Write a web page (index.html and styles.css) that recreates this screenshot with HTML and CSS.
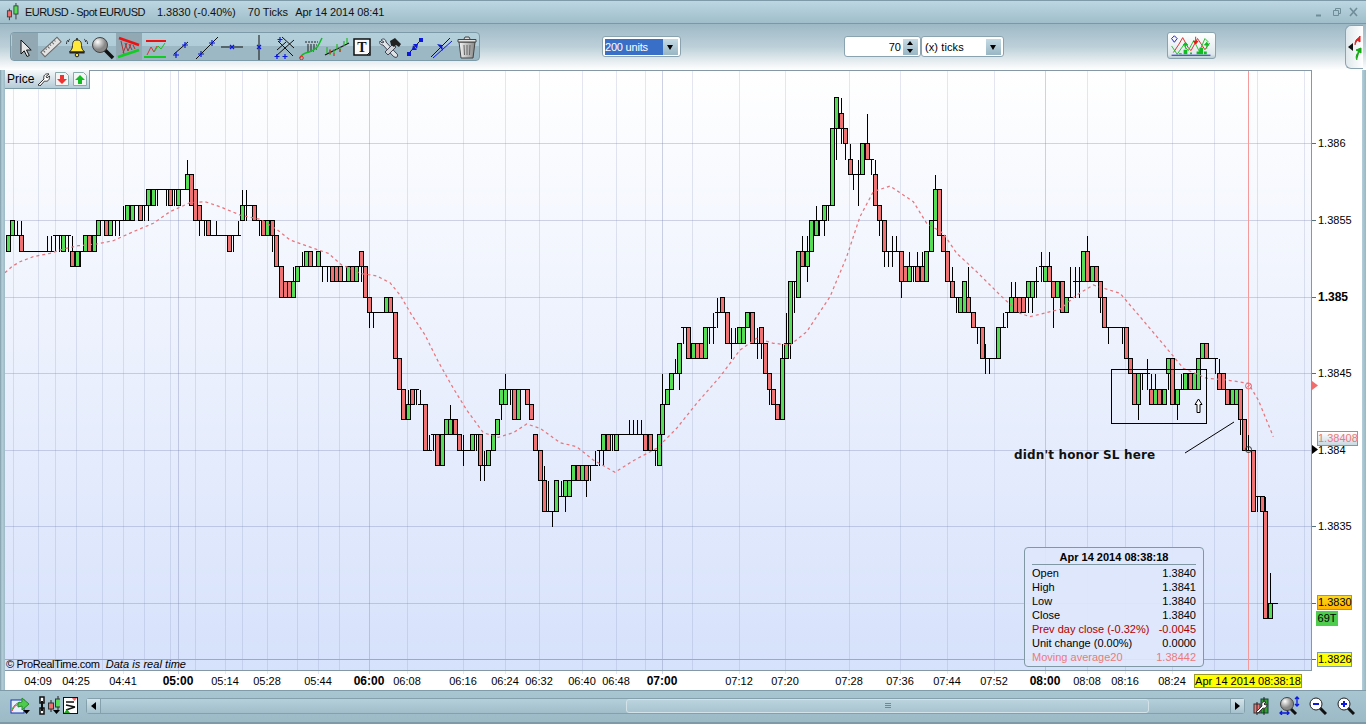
FILE: index.html
```html
<!DOCTYPE html>
<html lang="en">
<head>
<meta charset="utf-8">
<title>EURUSD - Spot EUR/USD</title>
<link rel="stylesheet" href="styles.css">
</head>
<body>
<div class="app">
  <header class="titlebar">
    <svg class="title-ico" viewBox="0 0 18 22"><path d="M4 7v14M12 0v20" stroke="#222"/><rect x="1.5" y="9.5" width="5" height="7.5" fill="#ee7070" stroke="#333"/><rect x="9.5" y="3.5" width="5" height="10" fill="#55dd55" stroke="#333"/></svg>
    <span class="t1">EURUSD - Spot EUR/USD</span>
    <span class="t2">1.3830 (-0.40%)</span>
    <span class="t3">70 Ticks</span>
    <span class="t4">Apr 14 2014 08:41</span>
    <div class="winctl">
      <svg viewBox="0 0 42 10" width="42" height="10"><path d="M0 8.5h5" stroke="#6f8c99" stroke-width="2"/><path d="M17.5 3.5h5v5h-5zM19.5 3.5v-2h5v5h-2" fill="none" stroke="#6f8c99"/><path d="M34 1l7 8M41 1l-7 8" stroke="#6f8c99" stroke-width="1.6"/></svg>
    </div>
  </header>

  <section class="toolbar">
    <div class="tools">
      <button class="tool on"><svg viewBox="0 0 26 26"><path d="M9 6v14l3.200-3.200 2.800 5.700 2.300-1-2.800-5.500h4.700z" fill="#e6e6e6" stroke="#111"/></svg></button>
      <button class="tool"><svg viewBox="0 0 26 26"><g transform="rotate(-43 13 13)"><rect x="2" y="10" width="22" height="6" fill="#e4e4e4" stroke="#666"/><path d="M5 10.500v2.500M8 10.500v1.500M11 10.500v2.500M14 10.500v1.500M17 10.500v2.500M20 10.500v1.500" stroke="#666"/></g></svg></button>
      <button class="tool"><svg viewBox="0 0 26 26"><path d="M13 6c-4 0-4.500 3-4.500 5.500 0 4-2 5-3 6.500h15c-1-1.500-3-2.500-3-6.500C17.500 9 17 6 13 6z" fill="#ffe83a" stroke="#222"/><path d="M5.500 18.500h15" stroke="#222" stroke-width="2"/><circle cx="13" cy="21" r="1.800" fill="#ffe83a" stroke="#222"/><circle cx="13" cy="5" r="1" fill="#222"/><path d="M4 6c-1 1-1.500 2-1.500 4M6 5c-1 .5-1.500 1.500-1.500 3M22 6c1 1 1.500 2 1.500 4M20 5c1 .5 1.500 1.500 1.500 3" stroke="#333" fill="none"/></svg></button>
      <button class="tool"><svg viewBox="0 0 26 26"><defs><radialGradient id="lens" cx=".35" cy=".3"><stop offset="0" stop-color="#fff"/><stop offset="1" stop-color="#888"/></radialGradient></defs><path d="M15 16l8 8" stroke="#111" stroke-width="3.500"/><circle cx="10" cy="11" r="7.500" fill="url(#lens)" stroke="#444"/></svg></button>
      <button class="tool on"><svg viewBox="0 0 26 26"><path d="M5 7l3 13M9 9l3 8M13 10l3 6M17 11l2 4" stroke="#a33"/><path d="M7 19l4-10M12 17l3-7" stroke="#a33"/><path d="M3 4l20 7" stroke="#ee1111" stroke-width="2.500"/><path d="M2 23l21-7" stroke="#11cc22" stroke-width="2.500"/></svg></button>
      <button class="tool"><svg viewBox="0 0 26 26"><path d="M4 7h20" stroke="#ee1111" stroke-width="2"/><path d="M2 23h22" stroke="#11cc22" stroke-width="2"/><path d="M5 21l4-8 3 5 3-6" stroke="#d33" fill="none"/><path d="M12 18l4-6 3 3 4-6" stroke="#2b2" fill="none"/></svg></button>
      <button class="tool"><svg viewBox="0 0 26 26"><path d="M6 20L20 8" stroke="#111"/><path d="M8 18v6M5 21h6M17 8v6M14 11h6" stroke="#0b17e0" stroke-width="1.200"/></svg></button>
      <button class="tool"><svg viewBox="0 0 26 26"><path d="M2 25L24 3" stroke="#111"/><path d="M7 17v6M4 20h6M18 6v6M15 9h6" stroke="#0b17e0" stroke-width="1.200"/></svg></button>
      <button class="tool"><svg viewBox="0 0 26 26"><path d="M1 13h22" stroke="#111"/><path d="M10 11l4 4M14 11l-4 4" stroke="#0b17e0" stroke-width="1.200"/></svg></button>
      <button class="tool"><svg viewBox="0 0 26 26"><path d="M13 1v25" stroke="#111"/><path d="M11 11l4 4M15 11l-4 4" stroke="#0b17e0" stroke-width="1.200"/></svg></button>
      <button class="tool"><svg viewBox="0 0 26 26"><path d="M4 22L22 6M10 3L22 14M6 7l15 15M14 8l-9 8" stroke="#111"/><path d="M8 3v5M5.500 5.500h5M5 20v5M2.500 22.500h5M13 20v5M10.500 22.500h5" stroke="#0b17e0" stroke-width="1.200"/></svg></button>
      <button class="tool"><svg viewBox="0 0 26 26"><path d="M7 8h13M9 11h10M9 13h8M9 15h10M9 17h7" stroke="#222" stroke-dasharray="2 1"/><path d="M2 24c2-5 6-5 9-6s8-3 10-8l3-6" stroke="#11bb22" stroke-width="1.500" fill="none"/><circle cx="3.500" cy="24" r="1.800" fill="none" stroke="#e22"/></svg></button>
      <button class="tool"><svg viewBox="0 0 26 26"><path d="M1 21L25 9" stroke="#111" stroke-width="1.200"/><path d="M3 13v6M6 15v6M10 15v4M13 10v6M16 13v5M20 7v5M23 4v5" stroke="#2b2" stroke-width="1.200"/><path d="M6 16v4M10 19v3M16 15v3" stroke="#d22" stroke-width="1.200"/></svg></button>
      <button class="tool"><svg viewBox="0 0 26 26"><rect x="4" y="5" width="16" height="16" fill="#fafafa" stroke="#111" stroke-width="1.500"/><text class="t-ico" x="12" y="18" text-anchor="middle">T</text><path d="M17 21l3-3" stroke="#111"/></svg></button>
      <button class="tool"><svg viewBox="0 0 26 26"><path d="M5 6c2-2 5-1 5 2l10 11c2 1 2 3 1 4s-3 0-4-1L7 11c-3 0-4-2-3-4l2 2 2-1z" fill="#dfe4e6" stroke="#445"/><path d="M9 18l8-8 3 3-8 8z" fill="#cfd4d6" stroke="#445"/><path d="M14 7l5-3 6 6-2 3-3-2-2 2-3-2z" fill="#222"/></svg></button>
      <button class="tool"><svg viewBox="0 0 26 26"><rect x="17" y="4" width="4" height="4" fill="#0b17e0"/><rect x="5" y="18" width="4" height="4" fill="#0b17e0"/><path d="M8 18l9-10" stroke="#111"/><path d="M11 10l5 0-1 5zM15 16l-5 0 1-5z" fill="#0b17e0"/></svg></button>
      <button class="tool"><svg viewBox="0 0 26 26"><path d="M3 23L22 4" stroke="#111"/><path d="M5 24L24 7" stroke="#0b17e0"/><path d="M9 10l6 7-1-6z" fill="#0b17e0"/></svg></button>
      <button class="tool"><svg viewBox="0 0 26 26"><defs><linearGradient id="can" x1="0" x2="1"><stop offset="0" stop-color="#f4f4f4"/><stop offset="1" stop-color="#888"/></linearGradient></defs><path d="M5 8l2 16h12l2-16z" fill="url(#can)" stroke="#444"/><path d="M10 11l.5 10M13 11v10M16 11l-.5 10" stroke="#666"/><path d="M4 5.500h18v2.500H4z" fill="#e6e6e6" stroke="#444"/><path d="M10 5l1-2h4l1 2" fill="#ddd" stroke="#444"/></svg></button>
    </div>

    <div class="combo combo-units"><span class="sel">200 units</span><span class="arrowbtn"></span></div>
    <div class="spin"><span class="num">70</span><span class="updown"><i class="up"></i><i class="dn"></i></span></div>
    <div class="combo combo-ticks"><span class="plain">(x) ticks</span><span class="arrowbtn"></span></div>

    <button class="chartbtn"><svg viewBox="0 0 49 27" width="47" height="25"><path d="M5 21l6-9 4-7 6 11 3 3 7-13 4 6 4 6 5-7" stroke="#d22" fill="none"/><path d="M3 14l6 9 7-10 5 6 6-11 6 12 6-14 4 4" stroke="#2b2" fill="none"/><path d="M3 6l3-3 3 3-3 4zM3 24h42" stroke="#11c" fill="none"/><path d="M16 18h4v5h-4zM30 20h3v3h-3zM33 16h4v7h-4zM23 21h2v2h-2zM38 20h3v3h-3zM11 22h3v1h-3z" fill="#1b2"/><path d="M29 4v7M26.500 9l2.500 3 2.500-3z" fill="#e11" stroke="#e11"/><path d="M18 17v-6M15.500 13l2.500-3 2.500 3z" fill="#1b2" stroke="#1b2"/><path d="M41 17v-6M38.500 13l2.500-3 2.500 3z" fill="#1b2" stroke="#1b2"/></svg></button>
    <div class="sidetab"><svg viewBox="0 0 18 44" width="18" height="44"><path d="M2 21l5-4v8z" fill="#111"/><path d="M9 19c0-4 1-6 4-7M14 10v6l-3-2z" stroke="#d22" fill="#d22" stroke-width="1"/><path d="M11 34c-2-3 0-7 3-10M10 24l5-2 0 5z" stroke="#1a1" fill="#1a1"/></svg></div>
  </section>

  <main class="stage">
    <div class="frame-l"></div>
    <div class="chart" id="chart">
      <svg id="plot" class="plot" viewBox="5 70 1357 620" width="1357" height="620"></svg>

      <div class="pricetab">
        <span>Price</span>
        <svg viewBox="0 0 14 14" width="14" height="14"><path d="M1 13l6-6c-1-3 1-6 5-5L9 4.500l1 1.500 2.500-2c.5 4-2 6-5 5L3 14z" fill="#fff" stroke="#333"/></svg>
        <svg viewBox="0 0 14 14" width="14" height="14"><path d="M.5.500h10l3 3v10H.5z" fill="#f4f4f4" stroke="#8aa"/><path d="M5 3h4v4h3l-5 5-5-5h3z" fill="#e33"/></svg>
        <svg viewBox="0 0 14 14" width="14" height="14"><path d="M.5.500h10l3 3v10H.5z" fill="#f4f4f4" stroke="#8aa"/><path d="M5 12h4V8h3L7 3 2 8h3z" fill="#1b2"/></svg>
      </div>

      <div class="copyright"><span>© ProRealTime.com</span><em>Data is real time</em></div>
      <div class="note">didn't honor SL here</div>

      <div class="tag tag-ma">1.38408</div>
      <div class="tag tag-last">1.3830</div>
      <div class="tag tag-ticks">69T</div>
      <div class="tag tag-cursor">1.3826</div>
      <div class="tag tag-date">Apr 14 2014 08:38:18</div>

      <div class="infobox">
        <h4>Apr 14 2014 08:38:18</h4>
        <dl>
          <dt>Open</dt><dd>1.3840</dd>
          <dt>High</dt><dd>1.3841</dd>
          <dt>Low</dt><dd>1.3840</dd>
          <dt>Close</dt><dd>1.3840</dd>
          <dt class="neg">Prev day close (-0.32%)</dt><dd class="neg">-0.0045</dd>
          <dt>Unit change (0.00%)</dt><dd>0.0000</dd>
          <dt class="ma">Moving average20</dt><dd class="ma">1.38442</dd>
        </dl>
      </div>
    </div>
    <div class="frame-r"></div>
  </main>

  <footer class="bottom">
    <svg class="b1" viewBox="0 0 20 20" width="20" height="20"><rect x="1" y="4" width="13" height="13" fill="#e8f0ff" stroke="#1133aa"/><path d="M2 15c2-5 4-6 8-7" stroke="#d22" fill="none"/><path d="M2 13c2-4 5-6 8-7" stroke="#2b2" fill="none"/><path d="M8 7l4-1V2l7 6-7 6v-4l-4 1z" fill="#4ccb4c" stroke="#2a8a2a"/></svg>
    <svg class="tri" viewBox="0 0 7 4" width="7" height="4"><path d="M0 0h7L3.500 4z" fill="#000"/></svg>
    <svg class="b2" viewBox="0 0 24 20" width="24" height="20"><path d="M4 1h4v6H4zM4 12h4v6H4z" fill="#fff" stroke="#111" stroke-width="1.500"/><path d="M6 5v10" stroke="#111" stroke-width="2"/><path d="M15 4v12M22 0v14" stroke="#222"/><rect x="12.500" y="7" width="5" height="6" fill="#ee7070" stroke="#333"/><rect x="19.500" y="3" width="5" height="8" fill="#55dd55" stroke="#333"/></svg>
    <svg class="tri" viewBox="0 0 7 4" width="7" height="4"><path d="M0 0h7L3.500 4z" fill="#000"/></svg>
    <svg class="b3" viewBox="0 0 15 17" width="15" height="17"><rect x=".5" y=".5" width="14" height="16" fill="#fff" stroke="#111"/><path d="M3 5h8M3 8l9 2M3 13l9-3" stroke="#111" stroke-width="1.500"/><path d="M9 1h5L11.500 4z" fill="#e66"/><path d="M1 16h6L4 12z" fill="#2a2"/></svg>
    <div class="scroll">
      <span class="sb sb-l"><i></i></span>
      <div class="thumbtrack"><div class="thumb"><span class="grip"></span></div></div>
      <span class="sb sb-r"><i></i></span>
    </div>
    <svg class="b4" viewBox="0 0 16 18" width="16" height="18"><rect x="8" y="2" width="7" height="14" fill="#2fa02f" stroke="#143"/><rect x="1" y="7" width="6" height="9" fill="#e77" stroke="#333"/><path d="M11 0v18M4 5v13" stroke="#222"/><path d="M3 15l6-6c-1-3 1-5 4-4l-2 2 1 1 2-1c0 3-2 5-4 4l-5 5z" fill="#fff" stroke="#333"/></svg>
    <svg class="b5" viewBox="0 0 21 19" width="21" height="19"><path d="M11 12l6 6" stroke="#111" stroke-width="3"/><circle cx="8" cy="8" r="6.500" fill="url(#lens)" stroke="#444"/><path d="M18 1v9M16 3l2-2 2 2M16 8l2 2 2-2M1 17h9M3 15l-2 2 2 2M8 15l2 2-2 2" stroke="#0b17e0" fill="none" stroke-width="1.300"/></svg>
    <svg class="b6" viewBox="0 0 18 18" width="18" height="18"><path d="M11 11l6 6" stroke="#111" stroke-width="3"/><circle cx="7" cy="7" r="6" fill="#fff" stroke="#222"/><path d="M4 7h6" stroke="#0b17e0" stroke-width="2"/></svg>
    <svg class="b7" viewBox="0 0 18 18" width="18" height="18"><path d="M11 11l6 6" stroke="#111" stroke-width="3"/><circle cx="7" cy="7" r="6" fill="#fff" stroke="#222"/><path d="M4 7h6M7 4v6" stroke="#0b17e0" stroke-width="2"/></svg>
  </footer>
</div>
<script src="chart.js"></script>
</body>
</html>
```
FILE: styles.css
```css
* { box-sizing: border-box; }
html, body { margin: 0; padding: 0; }
body {
  width: 1366px; height: 724px; overflow: hidden;
  font-family: "Liberation Sans", Arial, sans-serif; font-size: 11px; color: #000;
  background: #a9c6d3;
}
.app { display: flex; flex-direction: column; height: 724px; }

.titlebar {
  height: 24px; display: flex; align-items: center; padding-left: 6px; position: relative;
  background: linear-gradient(#bcd7e2, #9fbdca);
  border-top: 1px solid #7e9aa8; border-bottom: 1px solid #7b98a6;
  font-size: 11px; letter-spacing: -.55px; color: #111;
}
.title-ico { width: 15px; height: 18px; flex: none; }
.t1 { margin-left: 4px; }
.t2 { margin-left: 12px; letter-spacing: 0; }
.t3 { margin-left: 12px; letter-spacing: 0; }
.t4 { margin-left: 7px; letter-spacing: -.08px; }
.winctl { margin-left: auto; margin-right: 8px; display: flex; }

.toolbar {
  height: 46px; display: flex; align-items: flex-start; flex: none;
  background: linear-gradient(#9db9c5 0%, #bdd0d9 50%, #ffffff 100%);
}
.tools {
  margin: 8px 0 0 10px; width: 470px; height: 29px; padding: 0 0 0 1px; display: flex;
  border: 1px solid #7d9aa8; border-radius: 4px;
  background: linear-gradient(#b4d0db 0, #afccd8 50%, #9cb8c4 50%, #9cb8c4 100%);
}
.tool {
  width: 26px; height: 27px; padding: 0; border: 0; background: none; display: flex;
  align-items: center; justify-content: center;
}
.tool svg { width: 26px; height: 26px; display: block; }
.tool.on { background: #92a8b3; }
.t-ico { font-family: "Liberation Serif", serif; font-weight: 700; font-size: 14px; fill: #111; }

.combo, .spin {
  height: 21px; margin-top: 12px; background: #fff; border: 1px solid #8aa3af; border-radius: 3px;
  display: flex; align-items: center; padding: 1px; font-size: 11px;
}
.combo-units { width: 79px; margin-left: 122px; }
.sel { width: 58px; height: 16px; margin-left: 1px; background: #3a6fc8; color: #fff; line-height: 16px; letter-spacing: -.2px; }
.arrowbtn {
  width: 15px; height: 16px; margin-left: auto; margin-right: 1px; position: relative;
  background: linear-gradient(#c6dbe4, #98b6c4);
}
.arrowbtn::after {
  content: ""; position: absolute; left: 4px; top: 6px;
  border: 3.5px solid transparent; border-top: 5px solid #000; border-bottom: 0;
}
.spin { width: 77px; margin-left: 163px; justify-content: flex-end; }
.num { margin-right: 2px; }
.updown { width: 15px; height: 16px; display: flex; flex-direction: column; margin-right: 1px; background: linear-gradient(#c6dbe4, #98b6c4); }
.updown i { flex: 1; position: relative; display: block; }
.updown .up::after { content: ""; position: absolute; left: 4px; top: 2px; border: 3.5px solid transparent; border-bottom: 4px solid #000; border-top: 0; }
.updown .dn::after { content: ""; position: absolute; left: 4px; top: 2px; border: 3.5px solid transparent; border-top: 4px solid #000; border-bottom: 0; }
.combo-ticks { width: 83px; margin-left: 0; }
.plain { margin-left: 2px; letter-spacing: .1px; }

.chartbtn {
  width: 49px; height: 27px; margin: 8px 0 0 163px; padding: 0; display: block;
  background: linear-gradient(#fff, #dfe8ec 85%, #b9cbd4); border: 1px solid #8aa3af; border-radius: 3px;
}
.chartbtn svg { display: block; }
.sidetab {
  width: 18px; height: 44px; margin: 1px 0 0 129px; background: linear-gradient(90deg, #dfe8ec, #fff);
  border: 1px solid #8aa3af; border-right: 0; border-radius: 6px 0 0 6px; overflow: hidden;
}
.sidetab svg { display: block; }

.stage { display: flex; flex: none; height: 620px; }
.frame-l { width: 5px; background: linear-gradient(90deg, #7e9aa8 0, #b4cfda 40%, #9cb9c6 100%); }
.frame-r { width: 4px; background: linear-gradient(90deg, #b4cfda, #98b6c4); }
.chart { width: 1357px; height: 620px; position: relative; background: #fff; }
.plot { display: block; position: absolute; left: 0; top: 0; }
.plot text { font-family: "Liberation Sans", Arial, sans-serif; font-size: 11px; fill: #000; }
.plot text.b { font-weight: 700; font-size: 12px; }

.pricetab {
  position: absolute; left: 0; top: 0; width: 85px; height: 19px; display: flex; align-items: center; gap: 4px; padding-left: 2px;
  background: linear-gradient(#f7fafb, #b4cbd6); border-right: 1px solid #7d9aa8; border-bottom: 1px solid #7d9aa8; font-size: 12px;
}
.pricetab span { margin-right: -1px; }

.copyright { position: absolute; left: 1px; top: 588px; display: flex; gap: 6px; font-size: 11px; letter-spacing: -.3px; }
.copyright em { font-style: italic; letter-spacing: .05px; }
.note {
  position: absolute; left: 1009px; top: 378px; font-family: "DejaVu Sans", sans-serif; font-weight: 700; font-size: 12px;
  letter-spacing: .15px; color: #111; white-space: nowrap;
}
.tag { position: absolute; font-size: 11px; line-height: 13px; border: 1px solid #7d9aa8; text-align: center; }
.tag-ma { left: 1312px; top: 361px; width: 41px; height: 15px; background: linear-gradient(#fff, #c9d9e2); color: #e77; }
.tag-last { left: 1312px; top: 525px; width: 35px; height: 15px; background: linear-gradient(#ffd81a, #ffb400); }
.tag-ticks { left: 1311px; top: 541px; width: 22px; height: 15px; background: #4dcc4d; border-color: #4dcc4d; }
.tag-cursor { left: 1312px; top: 582px; width: 35px; height: 15px; background: #ffff00; }
.tag-date { left: 1189px; top: 604px; width: 108px; height: 14px; line-height: 12px; background: #ffff00; border-color: #99992a; white-space: nowrap; }

.infobox {
  position: absolute; left: 1019px; top: 477px; width: 180px; height: 120px; padding: 3px 7px 0 7px;
  background: rgba(222, 231, 252, .92); border: 1px solid #8097a4; border-radius: 4px; font-size: 11px;
}
.infobox h4 { margin: 0; padding-bottom: 1px; height: 14px; line-height: 13px; font-size: 11px; font-weight: 700; text-align: center; border-bottom: 1px solid #8097a4; }
.infobox dl { margin: 0; display: grid; grid-template-columns: 1fr auto; grid-auto-rows: 14px; line-height: 14px; padding-top: 1px; }
.infobox dd { margin: 0; text-align: right; }
.infobox .neg { color: #b00000; }
.infobox .ma { color: #ec7a7a; }

.bottom {
  flex: 1; display: flex; align-items: center; padding: 0 8px 2px 10px;
  background: linear-gradient(#a7c6d2, #9cb9c6); border-top: 1px solid #7f9aa8; border-bottom: 2px solid #7e9aa8;
}
.bottom svg { flex: none; display: block; }
.tri { margin: 12px 0 0 -7px; }
.b2 { margin-left: 6px; }
.b3 { margin-left: 3px; }
.scroll { margin-left: 8px; width: 1159px; height: 16px; display: flex; border: 1px solid #84a0ad; border-radius: 3px; background: linear-gradient(#b5d0db, #a0bdc9); }
.sb { width: 14px; flex: none; position: relative; background: linear-gradient(#d4e4ea, #a5c1cd); }
.sb-l { border-right: 1px solid #84a0ad; }
.sb-r { border-left: 1px solid #84a0ad; }
.sb i { position: absolute; top: 3px; left: 4px; border: 4px solid transparent; border-left: 0; border-right: 5px solid #000; }
.sb-r i { border-right: 0; border-left: 5px solid #000; }
.thumbtrack { flex: 1; position: relative; }
.thumb { position: absolute; left: 525px; width: 523px; top: 0; bottom: 0; border: 1px solid #d3e2e8; border-radius: 3px; background: linear-gradient(#bad3dd, #a8c4d0); display: flex; align-items: center; justify-content: center; }
.grip { width: 6px; height: 5px; border-top: 1px solid #6e8894; border-bottom: 1px solid #6e8894; background: linear-gradient(#6e8894, #6e8894) center/100% 1px no-repeat; }
.b4 { margin-left: 8px; }
.b5 { margin-left: 10px; }
.b6 { margin-left: 9px; }
.b7 { margin-left: 10px; }
```
FILE: chart.js
```js
(function () {
  var NS = "http://www.w3.org/2000/svg";
  var svg = document.getElementById("plot");
  function el(name, attrs, parent, txt) {
    var e = document.createElementNS(NS, name);
    for (var k in attrs) e.setAttribute(k, attrs[k]);
    if (txt) e.textContent = txt;
    (parent || svg).appendChild(e);
    return e;
  }
  var PL = 5, PT = 70, PR = 1311, PB = 670;
  var defs = el("defs", {});
  var g = el("linearGradient", { id: "bg", x1: 0, y1: 0, x2: 0, y2: 1 }, defs);
  el("stop", { offset: 0, "stop-color": "#ffffff" }, g);
  el("stop", { offset: 1, "stop-color": "#d6e1fb" }, g);
  el("rect", { x: PL, y: PT, width: PR - PL, height: PB - PT, fill: "url(#bg)" });

  function y(n) { return Math.round(603 - 15.32 * n) + 0.5; }

  var times = [[38,"04:09"],[76,"04:25"],[123,"04:41"],[178,"05:00",1],[225,"05:14"],[267,"05:28"],[318,"05:44"],[369,"06:00",1],[407,"06:08"],[463,"06:16"],[505,"06:24"],[539,"06:32"],[582,"06:40"],[616,"06:48"],[662,"07:00",1],[739,"07:12"],[785,"07:20"],[849,"07:28"],[900,"07:36"],[947,"07:44"],[994,"07:52"],[1045,"08:00",1],[1087,"08:08"],[1125,"08:16"],[1172,"08:24"]];
  var extra = [13,55,102,144,170,195,242,297,339,645,692,1214,1257,1304];

  var grid = el("g", { "shape-rendering": "crispEdges" });
  extra.forEach(function (x) { el("path", { d: "M" + (x + .5) + " " + PT + "V" + PB, stroke: "#7a86b4", "stroke-opacity": .2 }, grid); });
  times.forEach(function (t) {
    el("path", { d: "M" + (t[0] + .5) + " " + PT + "V" + (PB + 4), stroke: "#7a86b4", "stroke-opacity": t[2] ? .36 : .2 }, grid);
    var o = { x: t[0], y: 685, "text-anchor": "middle" };
    if (t[2]) o["class"] = "b";
    el("text", o, null, t[1]);
  });

  var prices = [[30,"1.386"],[25,"1.3855"],[20,"1.385",1],[15,"1.3845"],[10,"1.384"],[5,"1.3835"],[0,""],[-4,""]];
  prices.forEach(function (p) {
    var yy = p[0] === -4 ? 659.5 : y(p[0]);
    var col = p[0] === -4 ? "#f08a8a" : "#6f78ad";
    var op = p[0] === -4 ? 1 : .3;
    el("path", { d: "M" + PL + " " + yy + "H" + PR, stroke: col, "stroke-opacity": op }, grid);
    el("path", { d: "M" + PR + " " + yy + "H1316", stroke: "#55707d" }, grid);
    if (p[1]) {
      var o = { x: 1318, y: yy + 3 };
      if (p[2]) o["class"] = "b";
      el("text", o, null, p[1]);
    }
  });
  el("path", { d: "M1248.5 " + PT + "V" + PB, stroke: "#f59a9a" }, grid);
  el("path", { d: "M" + PR + ".5 " + PT + "V" + PB + "M" + PL + " " + (PB + .5) + "H" + (PR + 1) + "M" + PL + " " + (PT + .5) + "H" + (PR + 1), stroke: "#8499a5" }, grid);

  var zones = [
    [0, "25:23+24 37:24+25 50:24^25 64:24-23^25 76:23 89:23 101:23 114:23 126:23 140:23^24 153:23^24 165:24v23 177:24v23 190:23+24 203:24v23 217:23-22^24 230:22+23 241:23v22 256:23+24 268:24-23 281:23+24 293:24+25 306:25 319:25-24 331:24+25 344:25v24 358:25v24 370:25^26 382:25+26 395:25+26 408:26 421:26-25 433:26v25 445:26+27v25 460:26+27 472:27v26 485:27 497:27v26 511:27-26 523:27v26 535:26+27 549:27 562:27+28^29 574:28-26 586:27-25 598:26-25v24 612:25v24 625:25-24 637:24 649:24^25 662:24 675:24 687:24-23 700:24v23 713:24^25 727:25+26^27 739:26^27v25 751:26 763:26-25 778:25v24 790:25-24 802:24+25 815:25-24v23 829:24-22 842:22-20 855:21-20 867:21-20 880:20+21^22 892:21+22 905:22^23 917:22+23 930:23-22 943:22 955:22+23 967:22v21 982:22v21 995:22-21 1007:22-21 1019:22-21 1032:21 1044:21+22"],
    [350, "7:22-21 19:21+22 34:23-22v21 46:22-20 58:20-19v18 70:19v18 83:19 95:19 109:19+20 121:20-19 136:19-16 148:16-14 160:14-12 173:12+13^14 186:14-13 199:14v13 211:13^14 224:13-10 238:10^11 250:11v10 262:11-9 275:9+11 288:11+12 301:11+12^13 314:12-11 326:11-10 340:10^11v9 352:10 365:10+11 377:11v10 391:11-9v8 403:9^10v8 415:9+10 428:10+11 442:11+12 454:13+14v12 466:13+14^15 479:14v13 493:14-12 505:12+14 517:14 530:14-13 544:13-12 556:11-10 569:10-8 581:8-6^9 594:6^8 607:6v5 619:6+8 632:7^8 645:7+8v6 658:7+8 670:8+9 683:9-8 696:8+9 709:9-8v7 721:9v8 734:9^10 747:10v9 760:10+11v9 773:11-10 785:11v10 799:10+11 812:11 825:11 836:11^12 850:11^12 862:11^12 874:11^12 886:11-10 900:11-10 914:10v9 926:9+11"],
    [660, "7:11+13^15 20:13+14 34:14+15 46:15^16 58:15+17v14 70:18v17 85:18-16 98:16+17 110:17-16 122:17-16 136:16+18 148:18v17 160:18^19v17 172:19^20v18 187:20-19 200:19-17 212:17^18v16 224:17^18 238:17+18 250:17+18 262:18+19 275:19-17 290:17^18v16 302:18-17v16 314:17-15 326:15-14v13 340:14-13 352:13-12 365:12+16^17 377:16+17^19 391:17+21v16 403:21v19 415:20+23 427:23-22^24 441:22+23^24v21 454:23+25 467:24+25^26 478:25v24 493:25+26v24 505:26v25 517:26+31 529:31+33v29 544:32-31^33v30 556:31-30v29 569:29-28^30 580:28v27 595:28^29v26 607:28+30 620:30-29^32 632:29v28 646:28-26^29 658:26-25v24 671:25-23v22 683:23v22 697:23^24v22 709:23^24 722:23-21v20 734:22-21 748:21+22^23 760:22v21 772:22-21^23 785:22-21^23 799:21+23 812:23+25 824:25+27^28 836:27-24 850:24-23 862:23-21 875:21-20^22 887:20v19 901:19+20 913:19+21 925:20-19^22 938:19-18 952:18v17 965:18-16 976:16^17v15 988:16v15"],
    [980, "43:16 55:16+18 68:18^19 80:19v18 94:19+20^21 106:20-19^21 118:20-19 130:20-19 145:20+21v19 157:20+21v19 169:21^22v20 182:22^23v21 195:21+22 208:22-21^23 220:21-20v18 232:20+21 246:21-19 258:19+20 270:20^22 284:21^22v20 297:21^22v20 310:21+23 322:23-21^24 335:21+22 347:22-21 361:21-20v19 373:20-18 385:18v17 398:18 411:18 425:18v17 437:18-16 449:16-15 463:15-13 475:13+15v12 487:15v14 500:15^16v14 513:14-13^15 525:13+14^15 538:14-13 551:13+14 565:15+16v14 577:16-13 590:13+14v12 603:14^15 616:14+15 629:15-14 641:14+15 653:14+16 667:16+17 679:17-16 692:16 704:16v15 718:15-14^16 730:15-14 742:14-13 755:13+14 768:13+14 781:14-12v11 792:12-10"],
    [1180, "205:10^11 220:10-6 232:7v6 245:7-6 256:6--1^7 271:-1+0^2 284:0"]
  ];

  var ma = [
    [0, 150, "15,368 35,350 60,335 100,320 150,310 190,297 235,287 290,282 340,272 400,245 460,220 510,185 570,158 615,155 660,170 720,195 780,208 830,238 870,270 940,295 985,310 1025,345 1050,355"],
    [350, 250, "30,70 80,78 120,98 150,135 185,195 225,255 265,335 310,415 350,480 400,548 445,562 490,548 530,522 570,535 630,578 680,590 730,630 795,667 850,632 920,595 970,545"],
    [660, 90, "50,1015 110,940 180,860 240,780 290,745 340,760 390,765 440,725 510,620 560,500 600,380 640,305 690,288 760,335 800,400 850,430 890,490 950,545 1020,615"],
    [980, 220, "120,280 150,290 240,268 290,225 340,195 420,220 480,290 560,385 610,445 680,475 740,480 805,490 835,540 880,650"]
  ];
  var pts = [];
  ma.forEach(function (z) {
    z[2].split(" ").forEach(function (p) {
      var a = p.split(",");
      pts.push((z[0] + a[0] / 3).toFixed(1) + "," + (z[1] + a[1] / 3).toFixed(1));
    });
  });

  var wicks = "", dojis = "";
  var gb = el("g", { "shape-rendering": "crispEdges" });
  var rects = [];
  var re = /^(-?\d+)(?:([+-])(-?\d+))?(?:\^(-?\d+))?(?:v(-?\d+))?$/;
  zones.forEach(function (z) {
    z[1].split(" ").forEach(function (tok) {
      var parts = tok.split(":");
      var X = Math.round(z[0] + parts[0] / 3);
      var m = re.exec(parts[1]);
      var o = +m[1], c = m[3] !== undefined ? +m[3] : o;
      var top = Math.max(o, c), bot = Math.min(o, c);
      var hi = m[4] !== undefined ? +m[4] : top, lo = m[5] !== undefined ? +m[5] : bot;
      if (hi !== lo) wicks += "M" + (X + .5) + " " + y(hi) + "V" + y(lo);
      if (o === c) dojis += "M" + (X - 2) + " " + y(o) + "H" + (X + 3);
      else rects.push([X, top, bot, c > o]);
    });
  });
  el("path", { d: wicks + dojis, stroke: "#000", fill: "none" }, gb);
  rects.forEach(function (r) {
    el("rect", { x: r[0] - 1.5, y: y(r[1]), width: 4, height: y(r[2]) - y(r[1]), fill: r[3] ? "#55dd55" : "#f07272", stroke: "#000" }, gb);
  });

  el("polyline", { points: pts.join(" "), fill: "none", stroke: "#e8757c", "stroke-width": 1.25, "stroke-dasharray": "3 3" });

  var ann = el("g", { "shape-rendering": "crispEdges" });
  el("rect", { x: 1111.5, y: 369.5, width: 95, height: 54, fill: "none", stroke: "#000" }, ann);
  el("path", { d: "M1185 453L1234 422", stroke: "#000", fill: "none" });
  el("path", { d: "M1198.500 399l3.500 5.500h-2v8h-3v-8h-2z", fill: "#fff", stroke: "#000" });
  el("circle", { cx: 1248.5, cy: 386, r: 3, fill: "none", stroke: "#e87078" });
  el("path", { d: "M1246 388l5-4", stroke: "#e87078" });
  el("circle", { cx: 1248.5, cy: 449.5, r: 3, fill: "none", stroke: "#333" });
  el("path", { d: "M1312 381l6 4.500-6 4.500z", fill: "#f26c6c" });
  el("path", { d: "M1312 445l6 4.500-6 4.500z", fill: "#000" });
})();
```
